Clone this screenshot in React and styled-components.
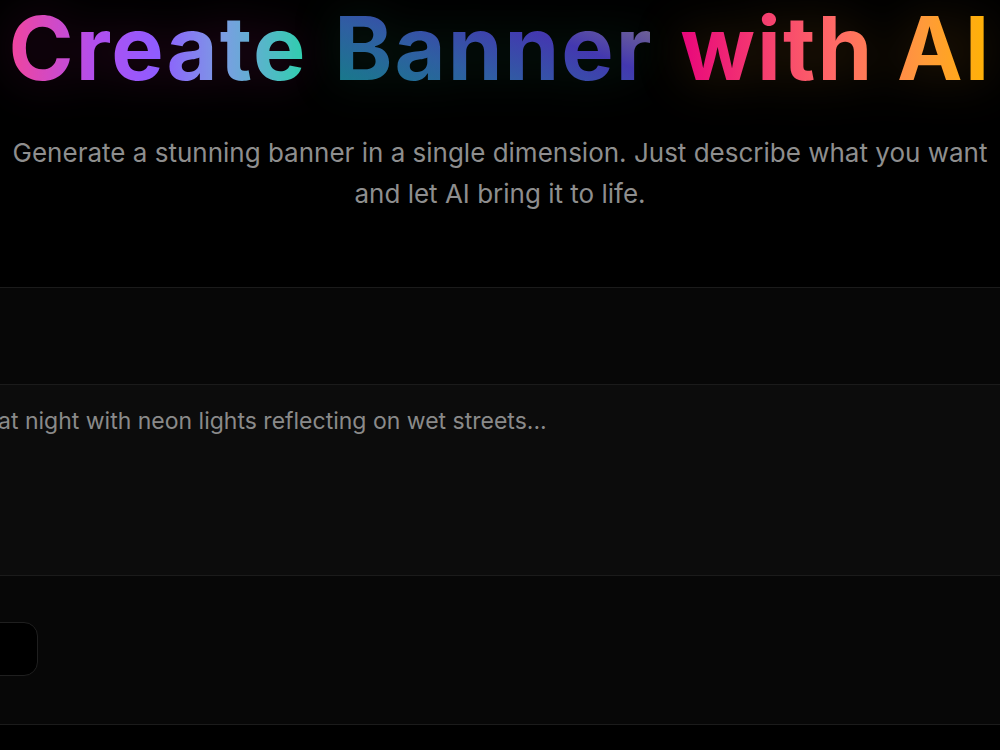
import React from "react";
import styled, { createGlobalStyle } from "styled-components";

const GlobalStyle = createGlobalStyle`
  html, body {
    margin: 0;
    background: #000;
    overflow: hidden;
  }
  * {
    box-sizing: border-box;
  }
`;

function App() {
  return (
    <>
      <GlobalStyle />
      <Page>
        <Title>
          <Word $tone="create">Create</Word> <Word $tone="banner">Banner</Word>{" "}
          <Word $tone="ai">with AI</Word>
        </Title>
        <Lead>
          Generate a stunning banner in a single dimension. Just describe what
          you want
          <br />
          and let AI bring it to life.
        </Lead>
        <Panel>
          <Section $shade="#070707" $height={97} />
          <PromptSection>
            <Prompt>
              A futuristic cityscape at night with neon lights reflecting on wet
              streets...
            </Prompt>
          </PromptSection>
          <ActionSection>
            <GhostButton>Reset</GhostButton>
          </ActionSection>
        </Panel>
      </Page>
    </>
  );
}

export default App;

const tones = {
  create: `
    background-image: linear-gradient(90deg, #f2449b 0%, #b04ff0 30%, #8f5cff 50%, #7a9ee2 72%, #2cd2ac 100%);
    filter: drop-shadow(0 0 22px rgba(120, 20, 90, 0.35));
  `,
  banner: `
    background-image: linear-gradient(20deg, #137f86 0%, #2f5ea2 35%, #4338b0 65%, #8a7c88 100%);
    filter: drop-shadow(0 0 22px rgba(20, 90, 60, 0.3));
  `,
  ai: `
    background-image: linear-gradient(90deg, #e8047c 0%, #f6436e 30%, #ff6a66 50%, #ff9a3a 78%, #ffb400 100%);
    filter: drop-shadow(0 0 24px rgba(140, 90, 20, 0.35));
  `,
};

const Page = styled.div`
  display: flex;
  flex-direction: column;
  align-items: center;
  font-family: Inter, "Noto Sans", sans-serif;
  padding-top: 4px;
  width: 1000px;
`;

const Title = styled.h1`
  margin: 0;
  font-size: 88px;
  line-height: 1;
  font-weight: 700;
  letter-spacing: 2px;
  white-space: nowrap;
  color: #fff;
`;

const Word = styled.span`
  display: inline-block;
  padding: 0 2px;
  -webkit-background-clip: text;
  background-clip: text;
  color: transparent;
  ${(p) => tones[p.$tone]}
`;

const Lead = styled.p`
  margin: 40px 0 0;
  font-size: 26px;
  line-height: 41px;
  color: #8e8e8e;
  text-align: center;
  white-space: nowrap;
`;

const Panel = styled.div`
  align-self: flex-start;
  margin: 73px 0 0 -300px;
  width: 1400px;
  border-top: 1px solid #1b1b1b;
  display: flex;
  flex-direction: column;
`;

const Section = styled.div`
  background: ${(p) => p.$shade};
  height: ${(p) => p.$height}px;
  border-bottom: 1px solid #1b1b1b;
`;

const PromptSection = styled(Section).attrs({ $shade: "#0c0c0c", $height: 191 })`
  padding: 21px 0 0 61px;
`;

const Prompt = styled.div`
  font-size: 23px;
  line-height: 30px;
  color: #8a8a8a;
  white-space: nowrap;
`;

const ActionSection = styled(Section).attrs({ $shade: "#070707", $height: 149 })`
  padding: 46px 0 0 180px;
`;

const GhostButton = styled.button`
  width: 158px;
  height: 54px;
  border-radius: 14px;
  border: 1px solid #1f1f1f;
  background: #000;
  color: #d0d0d0;
  font-family: inherit;
  font-size: 16px;
`;
